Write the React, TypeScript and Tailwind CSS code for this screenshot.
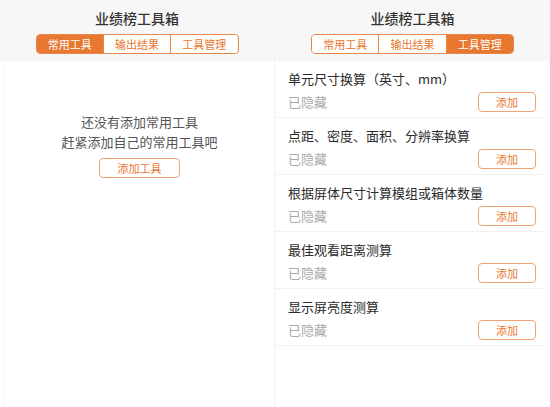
const tabs = ['常用工具', '输出结果', '工具管理']

const tools = [
    '单元尺寸换算（英寸、mm）',
    '点距、密度、面积、分辨率换算',
    '根据屏体尺寸计算模组或箱体数量',
    '最佳观看距离测算',
    '显示屏亮度测算',
]

const Header = ({ active }: { active: number }) => (
    <div className='h-[61px] bg-[#f7f7f7] flex flex-col items-center pt-[8px]'>
        <div className='text-[14px] leading-[20px] font-medium text-[#333]'>业绩榜工具箱</div>
        <div className='mt-[6px] flex h-[20px] w-[203px] rounded-[4px] border border-[#e9864a] overflow-hidden'>
            {tabs.map((t, i) => (
                <div
                    key={t}
                    className={`flex-1 flex items-center justify-center text-[11px] ${i > 0 ? 'border-l border-[#e9864a]' : ''} ${i === active ? 'bg-[#e8772f] text-white' : 'bg-white text-[#e8772f]'}`}
                >
                    {t}
                </div>
            ))}
        </div>
    </div>
)

export default function App() {
    return (
        <div
            className='w-[550px] h-[407px] flex bg-white overflow-hidden'
            style={{ fontFamily: '"Noto Sans CJK SC", "Noto Sans", sans-serif' }}
        >
            {/* common tools */}
            <div className='w-[275px] flex flex-col border-r border-[#f2f2f2]'>
                <Header active={0} />
                <div className='flex-1 flex flex-col items-center pt-[51px] border-l border-[#f4f4f4] ml-[4px]'>
                    <div className='text-[13px] leading-[20px] text-[#555]'>还没有添加常用工具</div>
                    <div className='text-[13px] leading-[20px] text-[#555]'>赶紧添加自己的常用工具吧</div>
                    <button className='mt-[6px] w-[81px] h-[20px] rounded-[4px] border border-[#f0a476] text-[11px] text-[#e8772f] flex items-center justify-center'>
                        添加工具
                    </button>
                </div>
            </div>
            {/* tool management */}
            <div className='flex-1 flex flex-col'>
                <Header active={2} />
                <div className='flex flex-col mr-[5px]'>
                    {tools.map(t => (
                        <div key={t} className='h-[57px] border-b border-[#f2f2f2] pl-[13px] pr-[9px] pt-[9px] flex flex-col'>
                            <div className='text-[13px] leading-[18px] text-[#2b2b2b]'>{t}</div>
                            <div className='mt-[4px] flex items-center justify-between'>
                                <span className='text-[13px] leading-[18px] text-[#aaa]'>已隐藏</span>
                                <button className='w-[58px] h-[20px] rounded-[4px] border border-[#f0a476] text-[11px] text-[#e8772f] flex items-center justify-center'>
                                    添加
                                </button>
                            </div>
                        </div>
                    ))}
                </div>
            </div>
        </div>
    )
}
